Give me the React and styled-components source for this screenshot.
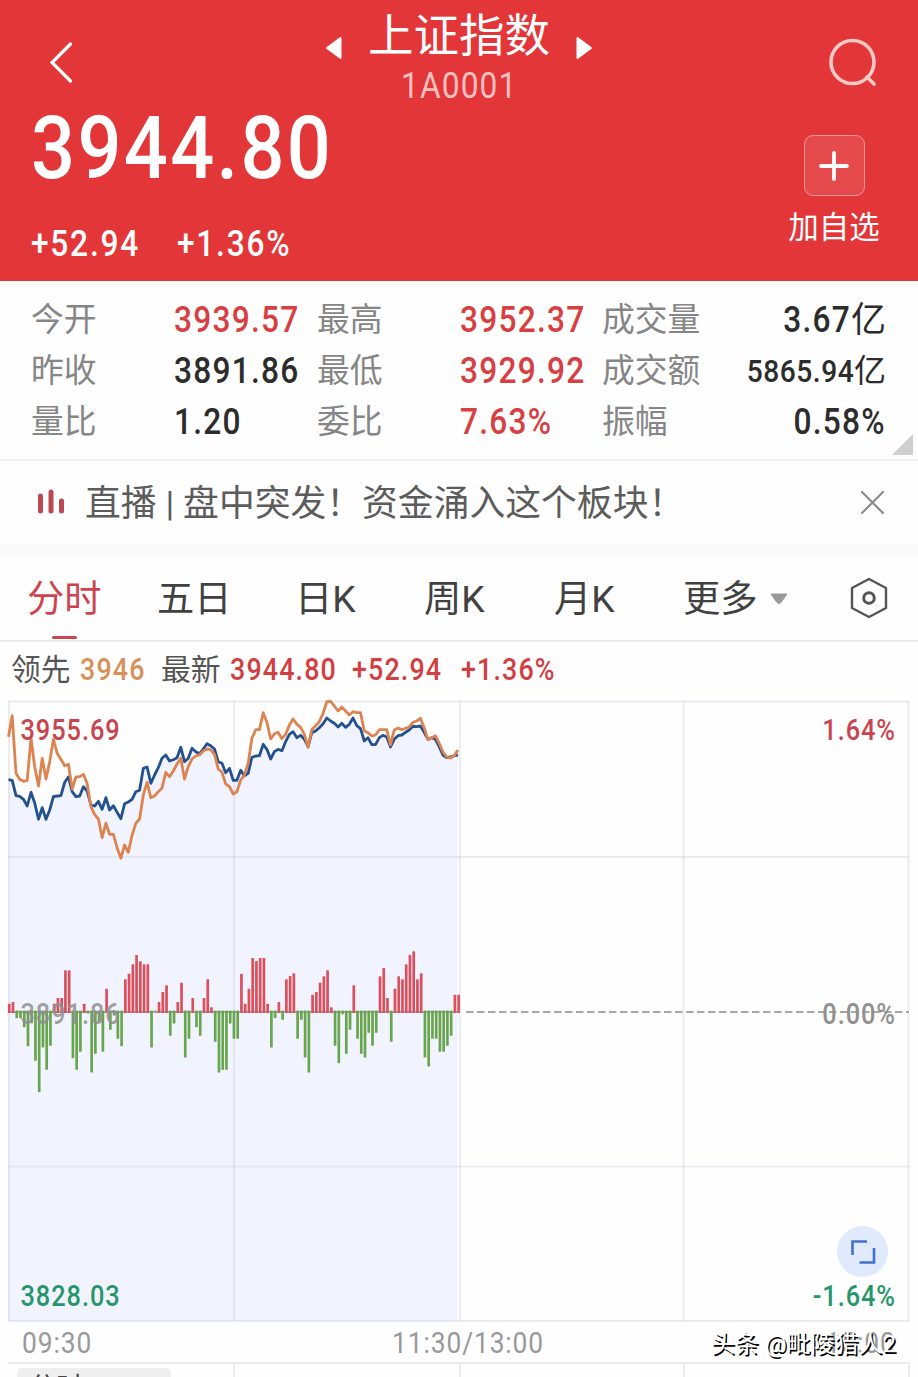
import styled, { createGlobalStyle, css } from 'styled-components';

const GlobalStyle = createGlobalStyle`
  * {
    box-sizing: border-box;
    margin: 0;
    padding: 0;
  }

  body {
    background: #fefefe;
    font-family: Roboto, 'Noto Sans CJK SC', sans-serif;
    overflow: hidden;
  }
`;

// Narrow, loosely spaced figures
const narrow = css`
  display: inline-block;
  transform: scaleX(0.88);
  transform-origin: left center;
  white-space: nowrap;
`;

const Page = styled.div`
  width: 918px;
  height: 1377px;
  overflow: hidden;
  display: flex;
  flex-direction: column;
  background: #fefefe;
`;

const Header = styled.header`
  height: 281px;
  flex: none;
  padding: 0 30px;
  color: #fff;
  background: #e33639;
`;

const TopBar = styled.div`
  height: 106px;
  display: grid;
  grid-template-columns: 60px 1fr 60px;
`;

const BackIcon = styled.svg`
  width: 26px;
  height: 44px;
  margin: 40px 0 0 18px;
`;

const SearchIcon = styled.svg`
  width: 52px;
  height: 52px;
  margin: 37px 0 0 -1px;
`;

const TitleBlock = styled.div`
  display: flex;
  flex-direction: column;
  align-items: center;
`;

const TitleRow = styled.div`
  display: flex;
  align-items: center;
  gap: 26px;
  height: 68px;
`;

const Title = styled.h1`
  padding-top: 5px;
  font-weight: 400;
  font-size: 45.5px;
  line-height: 68px;
`;

const Arrow = styled.svg`
  width: 18px;
  height: 24px;
  margin-top: 28px;
`;

const Code = styled.p`
  ${narrow}
  transform-origin: center;
  font-size: 36px;
  line-height: 36px;
  letter-spacing: 1.3px;
  color: #fcc0c0;
`;

const Quote = styled.div`
  display: flex;
  justify-content: space-between;
`;

const Price = styled.p`
  ${narrow}
  font-weight: 500;
  font-size: 88px;
  line-height: 84px;
  letter-spacing: 2.7px;
  margin-left: 1px;
`;

const Changes = styled.div`
  margin: 33px 0 0 1px;
  display: grid;
  grid-template-columns: 146px 146px;
`;

const Change = styled.span`
  ${narrow}
  font-weight: 500;
  font-size: 36px;
  line-height: 42px;
  letter-spacing: 2px;
`;

const AddButton = styled.button`
  width: 92px;
  margin: 29px 8px 0 0;
  display: flex;
  flex-direction: column;
  align-items: center;
  gap: 9px;
  border: 0;
  background: none;
  color: #fff;
  font-family: inherit;
  font-size: 30.5px;
  line-height: 46px;
  white-space: nowrap;
`;

const AddBox = styled.span`
  width: 61px;
  height: 61px;
  flex: none;
  display: grid;
  place-items: center;
  border: 1px solid #f19596;
  border-radius: 9px;
  background: #e54b4d;
`;

const Stats = styled.section`
  position: relative;
  height: 180px;
  flex: none;
  padding: 14px 32px 0 31px;
  display: grid;
  grid-template-columns: 143px 143px 143px 142px 100px 1fr;
  grid-auto-rows: 51px;
  align-items: center;
  border-bottom: 2px solid #f0f0f0;
`;

const StatLabel = styled.span`
  font-size: 32.8px;
  line-height: 51px;
  color: #868686;
  white-space: nowrap;
`;

const StatValue = styled.span`
  display: flex;
  justify-content: ${({ right }) => (right ? 'flex-end' : 'flex-start')};
  font-size: ${({ small }) => (small ? '32px' : '35px')};
  line-height: 51px;
  color: ${({ up }) => (up ? '#d83f42' : '#2c2c2c')};
`;

const StatNumber = styled.span`
  ${narrow}
  transform-origin: ${({ right }) => (right ? 'right' : 'left')} center;
  flex: none;
  font-weight: 500;
  font-size: ${({ small }) => (small ? '32px' : '36px')};
  letter-spacing: ${({ small }) => (small ? '0.6px' : '1.4px')};
`;

const Corner = styled.span`
  position: absolute;
  right: 5px;
  bottom: 4px;
  border-style: solid;
  border-width: 0 0 21px 21px;
  border-color: transparent transparent #cecece transparent;
`;

const News = styled.section`
  height: 94px;
  flex: none;
  padding: 0 32px 0 37px;
  display: flex;
  align-items: center;
  border-bottom: 12px solid #fafafa;
`;

const NewsText = styled.p`
  flex: 1;
  margin-left: 20px;
  padding-top: 3px;
  font-size: 35.8px;
  line-height: 52px;
  color: #5c5c5c;
  white-space: pre;
`;

const Tabs = styled.nav`
  height: 87px;
  flex: none;
  padding-left: 27px;
  display: grid;
  grid-template-columns: 130px 138px 129px 130px 129px 167px 40px;
  border-bottom: 2px solid #ececec;
`;

const Tab = styled.a`
  position: relative;
  display: flex;
  align-items: center;
  gap: 12px;
  padding-top: ${({ icon }) => (icon ? 0 : '3px')};
  font-size: 37.3px;
  line-height: 82px;
  color: ${({ active }) => (active ? '#cf434e' : '#414141')};

  &::after {
    content: '';
    display: ${({ active }) => (active ? 'block' : 'none')};
    position: absolute;
    left: 25px;
    bottom: 1px;
    width: 25px;
    height: 3px;
    border-radius: 2px;
    background: #c94450;
  }
`;

const Legend = styled.div`
  height: 58px;
  flex: none;
  padding: 0 0 3px 11px;
  display: grid;
  grid-template-columns: 69px 81px 69px 122px 109px 1fr;
  align-items: center;
  font-size: 29.8px;
  line-height: 55px;
  color: #555;
`;

const Figure = styled.span`
  ${narrow}
  font-weight: 500;
  font-size: 30.5px;
  letter-spacing: 1.3px;
  color: ${({ color }) => color || '#d23f43'};
`;

const ChartArea = styled.div`
  position: relative;
  height: 622px;
  flex: none;
`;

const Chart = styled.svg`
  display: block;
  width: 918px;
  height: 622px;
`;

const ChartLabel = styled.text`
  font-family: Roboto, sans-serif;
  font-weight: 500;
  font-size: 28.8px;
  letter-spacing: 1.1px;
  text-anchor: ${({ $end }) => ($end ? 'end' : 'start')};
  transform-box: fill-box;
  transform-origin: ${({ $end }) => ($end ? 'right' : 'left')} center;
  transform: scaleX(0.88);
`;

const ExpandButton = styled.button`
  position: absolute;
  left: 837px;
  top: 526px;
  width: 51px;
  height: 51px;
  display: grid;
  place-items: center;
  border: 0;
  border-radius: 50%;
  background: #e0eafc;
`;

const Axis = styled.div`
  position: relative;
  height: 42px;
  flex: none;
  margin: 0 8px;
  padding: 2px 14px 0;
  display: grid;
  grid-template-columns: 370px 1fr auto;
  align-items: center;
  font-size: 30px;
  line-height: 38px;
  color: #999;
  border-bottom: 2px solid #ececec;
`;

const AxisTime = styled.span`
  ${narrow}
  transform-origin: ${({ right }) => (right ? 'right' : 'left')} center;
  letter-spacing: 1px;
`;

const Watermark = styled.span`
  position: absolute;
  right: 14px;
  top: 1px;
  font-size: 24px;
  line-height: 42px;
  font-weight: 400;
  color: #fff;
  text-shadow: 1.5px 1.5px 0 #000;
  white-space: nowrap;
`;

const SubChart = styled.div`
  flex: 1;
  margin: 0 8px;
  display: grid;
  grid-template-columns: 227px 226px 224px 1fr;
  border-right: 2px solid #ececec;
`;

const SubCell = styled.div`
  height: 14px;
  padding: 4px 0 0 9px;
  border-right: 2px solid #ececec;

  &:last-child {
    border-right: 0;
  }
`;

const Chip = styled.span`
  display: block;
  width: 154px;
  height: 40px;
  padding-left: 12px;
  border-radius: 5px;
  background: #efefef;
  font-size: 27px;
  line-height: 40px;
  color: #444;
`;

// One value per minute, in thirds of a pixel from the chart's top offset
const PRICE = [
  254, 256, 302, 304, 313, 333, 292, 324, 373, 338, 373, 345, 305, 303, 302, 262, 246, 290, 305, 303,
  275, 288, 330, 333, 319, 343, 308, 345, 332, 352, 371, 326, 321, 313, 290, 286, 220, 216, 265, 240,
  218, 190, 180, 198, 194, 188, 157, 200, 190, 160, 170, 176, 162, 146, 152, 162, 200, 205, 233, 220,
  256, 256, 226, 242, 235, 187, 183, 182, 148, 163, 192, 170, 163, 167, 140, 118, 110, 128, 121, 133,
  155, 113, 108, 98, 86, 69, 78, 85, 96, 85, 97, 88, 69, 92, 101, 138, 128, 149, 149, 128,
  121, 126, 156, 133, 122, 120, 112, 105, 94, 95, 93, 112, 133, 128, 133, 155, 180, 188, 186, 182, 180,
];

const LEAD = [
  125, 62, 235, 253, 259, 256, 130, 215, 273, 190, 252, 200, 133, 175, 193, 212, 208, 282, 246, 245,
  238, 265, 335, 358, 372, 428, 385, 418, 418, 458, 490, 450, 472, 420, 385, 372, 300, 262, 308, 303,
  290, 280, 232, 245, 228, 207, 190, 252, 215, 192, 183, 180, 168, 162, 164, 178, 222, 232, 267, 275,
  297, 290, 255, 240, 205, 130, 104, 104, 53, 82, 132, 116, 112, 131, 118, 90, 72, 88, 97, 118,
  157, 104, 92, 80, 55, 20, 19, 33, 48, 36, 48, 60, 50, 53, 53, 108, 113, 123, 120, 104,
  104, 104, 150, 105, 99, 104, 100, 96, 82, 78, 70, 98, 134, 128, 122, 145, 170, 186, 189, 182, 165,
];

const FLOW = [
  25, 30, -20, -20, -47, -104, -35, -148, -242, -108, -175, -103, 25, 42, 42, 125, 125, -140, -175, -121,
  25, -6, -183, -127, -30, -121, 70, -55, -12, -82, -104, 98, 115, 143, 171, 152, 143, 143, -108, 0,
  30, 60, 80, -73, -36, 30, 88, -138, -82, 42, -47, -73, 42, 98, 14, -91, -183, -175, -175, -36,
  -82, -82, 115, 25, 70, 162, 153, 162, 162, 25, -108, -20, 30, -25, 98, 108, 116, -82, -25, -138,
  -183, 52, 60, 88, 107, 125, 14, -103, -155, -8, -127, -55, 80, -82, -127, -138, -64, -103, -64, 107,
  132, 42, -91, 70, 107, 98, 143, 171, 182, 98, 116, -138, -165, -82, -82, -121, -121, -103, -73, 52, 52,
];

const STEP = 3.745;
const ZERO = 312;
const pointX = (i) => 8.5 + i * STEP;
const pointY = (v) => v / 3 - 5;
const toPoints = (values) => values.map((v, i) => `${pointX(i).toFixed(1)},${pointY(v).toFixed(1)}`).join(' ');

const stats = [
  { label: '今开', value: '3939.57', up: true },
  { label: '最高', value: '3952.37', up: true },
  { label: '成交量', value: '3.67', unit: '亿', right: true },
  { label: '昨收', value: '3891.86' },
  { label: '最低', value: '3929.92', up: true },
  { label: '成交额', value: '5865.94', unit: '亿', right: true, small: true },
  { label: '量比', value: '1.20' },
  { label: '委比', value: '7.63%', up: true },
  { label: '振幅', value: '0.58%', right: true },
];

const IntradayChart = () => (
  <Chart viewBox="0 0 918 622">
    <polygon points={`8,621 ${toPoints(PRICE)} 457.5,621`} fill="#f1f4fe" />
    <g stroke="#bcbcd0" strokeOpacity="0.28" strokeWidth="2" fill="none">
      <path d="M8 1.5H909M8 157H909M8 466.5H909M8 621H909" />
      <path d="M9 1V621M234 1V621M460 1V621M683.5 1V621M908.5 1V621" />
    </g>
    <path d="M8 312H458" stroke="#8a8a8a" strokeWidth="1.6" />
    <path d="M466 312H909" stroke="#8a8a8a" strokeWidth="1.7" strokeDasharray="7.5 3.5" />
    {FLOW.map((v, i) => (
      <rect
        key={i}
        x={pointX(i) - 0.6}
        y={v > 0 ? ZERO - v / 3 : ZERO - 1.5}
        width="2.7"
        height={Math.abs(v) / 3 + 1}
        rx="0.6"
        fill={v > 0 ? '#dc4f5c' : '#69a54e'}
      />
    ))}
    <polyline points={toPoints(PRICE)} fill="none" stroke="#23508f" strokeWidth="2.8" strokeLinejoin="round" />
    <polyline points={toPoints(LEAD)} fill="none" stroke="#dd834f" strokeWidth="2.8" strokeLinejoin="round" />
    <ChartLabel x="20.5" y="40" fill="#c9444f">3955.69</ChartLabel>
    <ChartLabel x="20.5" y="324.5" fill="#909090" fillOpacity="0.85">3891.86</ChartLabel>
    <ChartLabel x="20.5" y="606" fill="#27966b">3828.03</ChartLabel>
    <ChartLabel $end x="896" y="40" fill="#c9444f">1.64%</ChartLabel>
    <ChartLabel $end x="896" y="324.5" fill="#909090">0.00%</ChartLabel>
    <ChartLabel $end x="896" y="606" fill="#27966b">-1.64%</ChartLabel>
  </Chart>
);

const App = () => {
  return (
    <>
      <GlobalStyle />
      <Page>
        <Header>
          <TopBar>
            <BackIcon viewBox="0 0 26 44" fill="none" stroke="#fff" strokeWidth="3.2" strokeLinecap="round">
              <path d="M22.5 4L4 22.5L22.5 41" />
            </BackIcon>
            <TitleBlock>
              <TitleRow>
                <Arrow viewBox="0 0 18 24" fill="#fff" stroke="#fff" strokeWidth="2" strokeLinejoin="round">
                  <path d="M16.5 2V22L3 12Z" />
                </Arrow>
                <Title>上证指数</Title>
                <Arrow viewBox="0 0 18 24" fill="#fff" stroke="#fff" strokeWidth="2" strokeLinejoin="round">
                  <path d="M1.5 2V22L15 12Z" />
                </Arrow>
              </TitleRow>
              <Code>1A0001</Code>
            </TitleBlock>
            <SearchIcon viewBox="0 0 52 52" fill="none" stroke="#ffc9c6" strokeWidth="3.6" strokeLinecap="round">
              <circle cx="25.5" cy="25" r="21.5" />
              <path d="M40 40L47 47" />
            </SearchIcon>
          </TopBar>
          <Quote>
            <div>
              <Price>3944.80</Price>
              <Changes>
                <Change>+52.94</Change>
                <Change>+1.36%</Change>
              </Changes>
            </div>
            <AddButton>
              <AddBox>
                <svg width="32" height="32" viewBox="0 0 32 32" stroke="#fff" strokeWidth="3.8" strokeLinecap="round">
                  <path d="M16 3V29M3 16H29" />
                </svg>
              </AddBox>
              加自选
            </AddButton>
          </Quote>
        </Header>

        <Stats>
          {stats.map(({ label, value, unit, up, right, small }) => [
            <StatLabel key={label}>{label}</StatLabel>,
            <StatValue key={`${label}-value`} up={up} right={right} small={small}>
              <StatNumber right={right} small={small}>
                {value}
              </StatNumber>
              {unit}
            </StatValue>,
          ])}
          <Corner />
        </Stats>

        <News>
          <svg width="28" height="28" viewBox="0 0 28 28" stroke="#b94a55" strokeWidth="5" strokeLinecap="round">
            <path d="M3.5 8V23M14 4V23M24.5 13V23" />
          </svg>
          <NewsText>直播 | 盘中突发！资金涌入这个板块！</NewsText>
          <svg width="28" height="28" viewBox="0 0 28 28" stroke="#8c8c8c" strokeWidth="2.2" strokeLinecap="round">
            <path d="M4 4L25 25M25 4L4 25" />
          </svg>
        </News>

        <Tabs>
          <Tab active>分时</Tab>
          <Tab>五日</Tab>
          <Tab>日K</Tab>
          <Tab>周K</Tab>
          <Tab>月K</Tab>
          <Tab>
            更多
            <svg width="18" height="12" viewBox="0 0 18 12" fill="#999" stroke="#999" strokeLinejoin="round">
              <path d="M1 1H17L11 9.5Q9 11.5 7 9.5Z" />
            </svg>
          </Tab>
          <Tab icon>
            <svg width="38" height="42" viewBox="0 0 38 42" fill="none" stroke="#555" strokeWidth="2.4" strokeLinejoin="round">
              <path d="M19 2L36 11V31L19 40L2 31V11Z" />
              <circle cx="19" cy="21" r="5.3" strokeWidth="3" />
            </svg>
          </Tab>
        </Tabs>

        <Legend>
          <span>领先</span>
          <Figure color="#d8905a">3946</Figure>
          <span>最新</span>
          <Figure>3944.80</Figure>
          <Figure>+52.94</Figure>
          <Figure>+1.36%</Figure>
        </Legend>

        <ChartArea>
          <IntradayChart />
          <ExpandButton>
            <svg width="26" height="26" viewBox="0 0 26 26" fill="none" stroke="#3f70cc" strokeWidth="2.6">
              <path d="M2.5 16V2.5H17M24 9V23.5H9.5" />
            </svg>
          </ExpandButton>
        </ChartArea>

        <Axis>
          <AxisTime>09:30</AxisTime>
          <AxisTime>11:30/13:00</AxisTime>
          <AxisTime right>15:00</AxisTime>
          <Watermark>头条 @毗陵猎人2</Watermark>
        </Axis>

        <SubChart>
          <SubCell>
            <Chip>分时MACD</Chip>
          </SubCell>
          <SubCell />
          <SubCell />
          <SubCell />
        </SubChart>
      </Page>
    </>
  );
};

export default App;
